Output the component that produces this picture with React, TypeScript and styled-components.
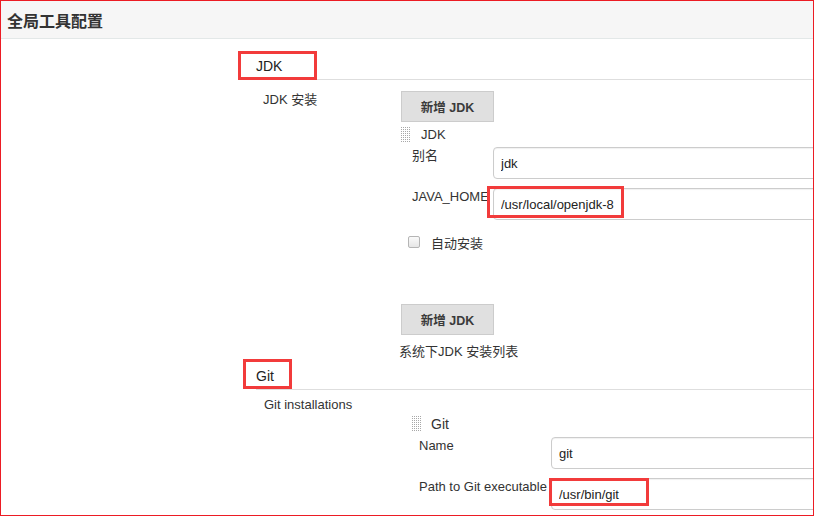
import React from 'react';
import styled, { createGlobalStyle } from 'styled-components';

const GlobalStyle = createGlobalStyle`
  html, body {
    margin: 0;
    padding: 0;
    background: #fff;
  }
  body {
    font-family: "Liberation Sans", Arial, "Noto Sans CJK SC", sans-serif;
    font-size: 13px;
    color: #333;
  }
`;

const Frame = styled.div`
  width: 814px;
  height: 516px;
  box-sizing: border-box;
  border: 1px solid #ec1c24;
  overflow: hidden;
  background: #fff;
`;

const PageHeader = styled.div`
  height: 37px;
  display: flex;
  align-items: center;
  padding-left: 6px;
  background: #f6f6f6;
  border-bottom: 1px solid #e3e8e8;
`;

const PageTitle = styled.h1`
  margin: 0;
  font-size: 16px;
  font-weight: bold;
  color: #333;
`;

const Content = styled.div`
  padding-left: 255px;
`;

const SectionHeading = styled.div<{ $gap: number }>`
  position: relative;
  margin-top: ${({ $gap }) => $gap}px;
  height: 26px;
  display: flex;
  align-items: center;
  border-bottom: 1px solid #dedede;
  font-size: 14px;
  color: #222;
`;

const Annotation = styled.span<{ $left: number; $top: number; $w: number; $h: number }>`
  position: absolute;
  left: ${({ $left }) => $left}px;
  top: ${({ $top }) => $top}px;
  width: ${({ $w }) => $w}px;
  height: ${({ $h }) => $h}px;
  box-sizing: border-box;
  border: 3px solid #f23b3b;
  pointer-events: none;
`;

const Row = styled.div<{ $gap: number }>`
  display: flex;
  margin-top: ${({ $gap }) => $gap}px;
`;

const RowLabel = styled.div<{ $width: number; $indent: number }>`
  width: ${({ $width }) => $width}px;
  flex: none;
  box-sizing: border-box;
  padding-left: ${({ $indent }) => $indent}px;
  line-height: 18px;
`;

const Controls = styled.div`
  flex: 1;
  min-width: 0;
`;

const AddButton = styled.button<{ $gap?: number }>`
  display: block;
  width: 93px;
  height: 31px;
  margin-top: ${({ $gap }) => $gap ?? 0}px;
  box-sizing: border-box;
  border: 1px solid #cccccc;
  background: #e0e0e0;
  color: #3a3a3a;
  font-family: inherit;
  font-size: 12.5px;
  font-weight: bold;
  padding: 0;
`;

const BlockHead = styled.div<{ $gap: number; $size: number; $textGap: number }>`
  display: flex;
  align-items: center;
  gap: ${({ $textGap }) => $textGap}px;
  height: 17px;
  margin-top: ${({ $gap }) => $gap}px;
  font-size: ${({ $size }) => $size}px;
`;

const FieldRow = styled.div<{ $gap: number }>`
  display: flex;
  margin-top: ${({ $gap }) => $gap}px;
`;

const FieldLabel = styled.div<{ $width: number; $indent: number }>`
  width: ${({ $width }) => $width}px;
  flex: none;
  box-sizing: border-box;
  padding-left: ${({ $indent }) => $indent}px;
  line-height: 18px;
  white-space: nowrap;
`;

const FieldBox = styled.div`
  position: relative;
  flex: 1;
  margin-right: -14px;
`;

const TextInput = styled.input`
  display: block;
  width: 100%;
  height: 32px;
  box-sizing: border-box;
  border: 1px solid #cccccc;
  border-radius: 4px;
  box-shadow: inset 0 1px 1px rgba(0, 0, 0, 0.06);
  padding: 0 7px;
  font-family: inherit;
  font-size: 13px;
  color: #222;
  background: #fff;
  outline: none;
`;

const CheckRow = styled.label<{ $gap: number }>`
  display: flex;
  align-items: center;
  gap: 11px;
  height: 16px;
  margin-top: ${({ $gap }) => $gap}px;
  padding-left: 7px;
`;

const CheckBox = styled.span`
  width: 12px;
  height: 12px;
  box-sizing: border-box;
  border: 1px solid #b5b5b5;
  border-radius: 2px;
  background: linear-gradient(#fafafa, #e6e6e6);
`;

const Description = styled.div`
  margin-top: 8px;
  margin-left: -2px;
  line-height: 18px;
`;

// dotted drag handle in front of each repeated block
const Grip: React.FC = () => {
  const dots = [];
  for (let r = 0; r < 8; r++) {
    for (let c = 0; c < 5; c++) {
      dots.push(<rect key={`${r}-${c}`} x={c * 2} y={r * 2} width={1} height={1} fill="#a8a8a8" />);
    }
  }
  return (
    <svg width="10" height="16" viewBox="0 0 10 16">
      {dots}
    </svg>
  );
};

const App: React.FC = () => {
  return (
    <>
      <GlobalStyle />
      <Frame>
        <PageHeader>
          <PageTitle>全局工具配置</PageTitle>
        </PageHeader>
        <Content>
          <SectionHeading $gap={14}>
            JDK
            <Annotation $left={-18} $top={-2} $w={79} $h={29} />
          </SectionHeading>
          <Row $gap={11}>
            <RowLabel $width={145} $indent={7}>JDK 安装</RowLabel>
            <Controls>
              <AddButton>新增 JDK</AddButton>
              <BlockHead $gap={4} $size={13} $textGap={10}>
                <Grip />
                JDK
              </BlockHead>
              <FieldRow $gap={4}>
                <FieldLabel $width={92} $indent={11}>别名</FieldLabel>
                <FieldBox>
                  <TextInput defaultValue="jdk" />
                </FieldBox>
              </FieldRow>
              <FieldRow $gap={9}>
                <FieldLabel $width={92} $indent={11}>JAVA_HOME</FieldLabel>
                <FieldBox>
                  <TextInput defaultValue="/usr/local/openjdk-8" />
                  <Annotation $left={-6} $top={-2} $w={137} $h={32} />
                </FieldBox>
              </FieldRow>
              <CheckRow $gap={14}>
                <CheckBox />
                自动安装
              </CheckRow>
              <AddButton $gap={54}>新增 JDK</AddButton>
              <Description>系统下JDK 安装列表</Description>
            </Controls>
          </Row>
          <SectionHeading $gap={2}>
            Git
            <Annotation $left={-13} $top={-4} $w={49} $h={30} />
          </SectionHeading>
          <Row $gap={6}>
            <RowLabel $width={156} $indent={8}>Git installations</RowLabel>
            <Controls>
              <BlockHead $gap={19} $size={14} $textGap={9}>
                <Grip />
                Git
              </BlockHead>
              <FieldRow $gap={5}>
                <FieldLabel $width={139} $indent={7}>Name</FieldLabel>
                <FieldBox>
                  <TextInput defaultValue="git" />
                </FieldBox>
              </FieldRow>
              <FieldRow $gap={9}>
                <FieldLabel $width={139} $indent={7}>Path to Git executable</FieldLabel>
                <FieldBox>
                  <TextInput defaultValue="/usr/bin/git" />
                  <Annotation $left={-2} $top={0} $w={100} $h={28} />
                </FieldBox>
              </FieldRow>
            </Controls>
          </Row>
        </Content>
      </Frame>
    </>
  );
};

export default App;
